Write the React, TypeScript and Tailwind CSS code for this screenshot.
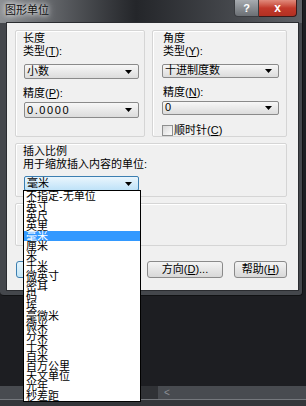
import clsx from "clsx";

const units = [
  "不指定-无单位",
  "英寸",
  "英尺",
  "英里",
  "毫米",
  "厘米",
  "米",
  "千米",
  "微英寸",
  "密耳",
  "码",
  "埃",
  "毫微米",
  "微米",
  "分米",
  "十米",
  "百米",
  "百万公里",
  "天文单位",
  "光年",
  "秒差距",
];

function Arrow() {
  return (
    <svg width="7" height="4" viewBox="0 0 7 4" className="shrink-0">
      <path d="M0 0h7L3.5 4z" fill="#000" />
    </svg>
  );
}

function Combo({
  value,
  className,
  active,
  mono,
}: {
  value: string;
  className: string;
  active?: boolean;
  mono?: boolean;
}) {
  return (
    <div
      className={clsx(
        "flex items-center justify-between rounded-[2px] border pl-[2px] pr-[6px]",
        active
          ? "border-[#3c7fb1] bg-linear-to-b from-[#eaf6fd] to-[#bfe2f8]"
          : "border-[#8a8a8a] bg-linear-to-b from-[#f7f7f7] to-[#dcdcdc]",
        className
      )}
    >
      <span className={clsx("leading-[11px]", mono && "tracking-[1.6px]")}>
        {value}
      </span>
      <Arrow />
    </div>
  );
}

function Label({ text, k }: { text: string; k: string }) {
  return (
    <div className="h-[13px]">
      {text}(<u>{k}</u>):
    </div>
  );
}

function Btn({
  children,
  className,
  focus,
}: {
  children?: React.ReactNode;
  className: string;
  focus?: boolean;
}) {
  return (
    <div
      className={clsx(
        "flex h-[17px] items-center justify-center rounded-[3px] border",
        focus
          ? "border-[#3c7fb1] bg-linear-to-b from-[#e5f4fc] to-[#c4e5f6]"
          : "border-[#8a8a8a] bg-linear-to-b from-[#f4f4f4] to-[#d8d8d8]",
        className
      )}
    >
      {children}
    </div>
  );
}

function Group({
  className,
  children,
}: {
  className: string;
  children?: React.ReactNode;
}) {
  return (
    <div
      className={clsx(
        "flex flex-col rounded-[2px] border border-[#d5d5d5] shadow-[inset_1px_1px_0_#fff]",
        className
      )}
    >
      {children}
    </div>
  );
}

export default function App() {
  return (
    <div className="relative flex h-[406px] w-[306px] flex-col overflow-hidden bg-[#1d1e22] font-['Liberation_Sans','Noto_Sans_CJK_SC',sans-serif] text-[11px] leading-[13px] text-black">
      {/* window */}
      <div className="flex h-[296px] w-[303px] flex-col rounded-b-[4px] border-r border-b border-[#111214] bg-[#44474c]">
        <div className="flex h-[23px] items-start justify-between bg-linear-to-r from-[#8c8f93] via-[#24262a] via-45% to-[#5f6267]">
          <span className="pt-[4px] pl-[5px] text-[11px] text-[#111] [text-shadow:0_0_5px_#fff,0_0_8px_#fff]">
            图形单位
          </span>
          <div className="mr-[5px] flex h-[17px]">
            <div className="flex w-[25px] items-center justify-center rounded-bl-[4px] border border-t-0 border-[#3a3c40] bg-linear-to-b from-[#a7abb0] to-[#6b6f74] text-[11px] font-bold text-white">
              ?
            </div>
            <div className="flex w-[38px] items-center justify-center rounded-br-[4px] border border-t-0 border-l-0 border-[#3a1a1a] bg-linear-to-b from-[#e08a7c] via-[#c2392b] to-[#b23022] text-[12px] font-bold text-white">
              x
            </div>
          </div>
        </div>
        <div className="flex pl-[7px]">
          <div className="flex h-[267px] w-[291px] flex-col bg-[#f0f0f0] pt-[7px] pr-[11px] pl-[8px] shadow-[0_0_0_1px_#2a2c30]">
            <div className="flex h-[107px]">
              <Group className="w-[130px] pt-[1px] pl-[7px]">
                <div className="h-[13px]">长度</div>
                <Label text="类型" k="T" />
                <Combo value="小数" className="mt-[6px] ml-px h-[15px] w-[115px]" />
                <div className="mt-[8px]">
                  <Label text="精度" k="P" />
                </div>
                <Combo
                  value="0.0000"
                  mono
                  className="mt-[2px] ml-px h-[16px] w-[115px]"
                />
              </Group>
              <Group className="ml-[7px] flex-1 pt-[1px] pl-[10px]">
                <div className="h-[13px]">角度</div>
                <Label text="类型" k="Y" />
                <Combo
                  value="十进制度数"
                  className="mt-[6px] -ml-px h-[15px] w-[117px]"
                />
                <div className="mt-[8px]">
                  <Label text="精度" k="N" />
                </div>
                <Combo value="0" className="mt-[2px] -ml-px h-[16px] w-[117px]" />
                <div className="mt-[10px] -ml-px flex h-[11px] items-center gap-[1px]">
                  <div className="h-[11px] w-[11px] border border-[#8e8f8f] bg-linear-to-br from-[#d8d8d8] to-[#fdfdfd]" />
                  <span>
                    顺时针(<u>C</u>)
                  </span>
                </div>
              </Group>
            </div>
            <Group className="mt-[6px] h-[54px] pt-[1px] pl-[7px]">
              <div className="h-[13px]">插入比例</div>
              <div className="h-[13px]">用于缩放插入内容的单位:</div>
              <Combo value="毫米" active className="mt-[5px] ml-px h-[15px] w-[115px]" />
            </Group>
            <Group className="mt-[6px] h-[43px]" />
            <div className="mt-[15px] ml-px flex gap-[11px]">
              <Btn focus className="w-[54px]">
                确定
              </Btn>
              <Btn className="w-[55px]">取消</Btn>
              <Btn className="w-[76px]">
                方向(<u>D</u>)...
              </Btn>
              <Btn className="w-[53px]">
                帮助(<u>H</u>)
              </Btn>
            </div>
          </div>
        </div>
      </div>

      {/* bottom scroll strip */}
      <div className="mt-auto flex h-[20px] flex-col">
        <div className="flex h-[13px] items-center bg-[#484b50]">
          <div className="ml-[141px] h-full w-[17px] bg-[#303236]" />
          <span className="ml-[6px] text-[10px] leading-[10px] text-[#8c8f94]">&lt;</span>
        </div>
        <div className="h-px bg-[#75787d]" />
        <div className="flex-1 bg-[#34363a]" />
      </div>

      {/* open dropdown list */}
      <div className="absolute top-[190px] left-[23px] flex w-[118px] flex-col border border-black bg-white">
        {units.map((u, i) => (
          <div
            key={u}
            className={clsx(
              "h-[10px] overflow-visible pl-[2px] leading-[10px] whitespace-nowrap",
              i === 4 ? "bg-[#3399ff] text-white" : "text-black"
            )}
          >
            {u}
          </div>
        ))}
      </div>
    </div>
  );
}
